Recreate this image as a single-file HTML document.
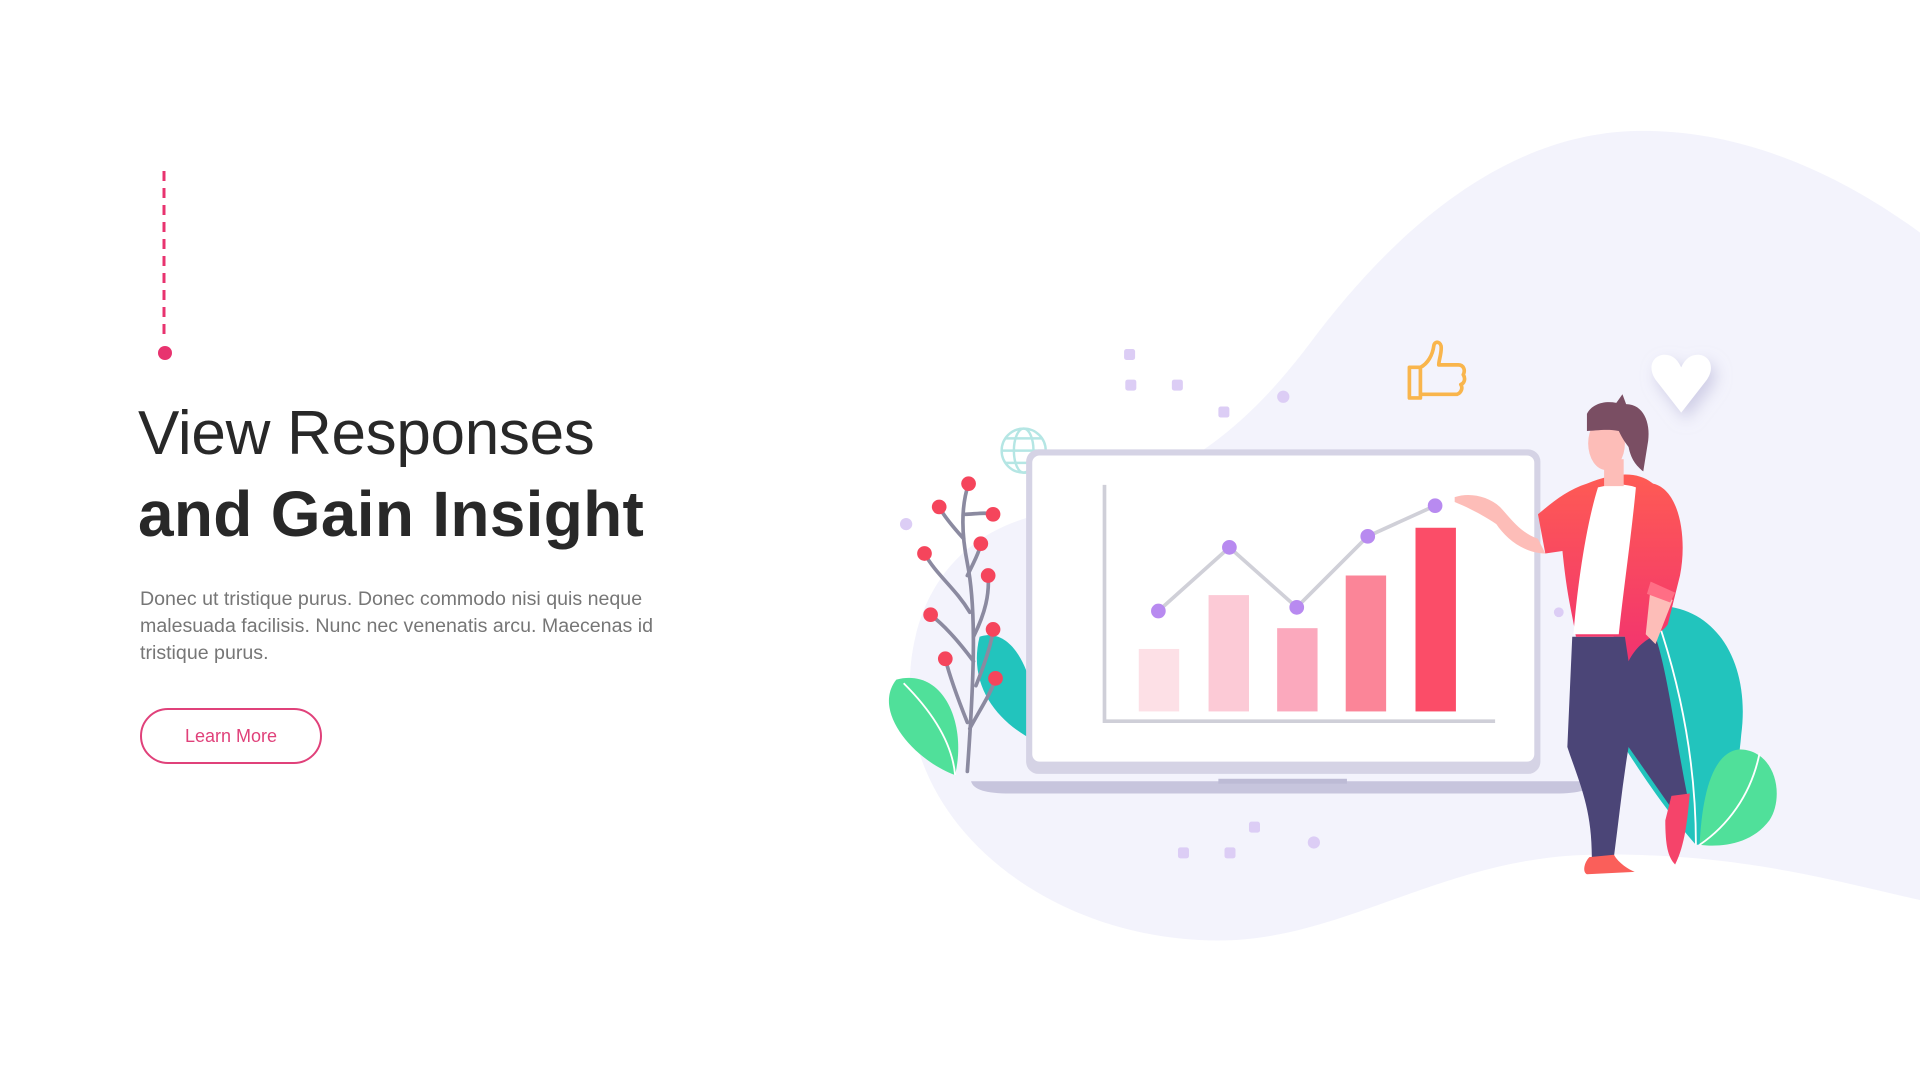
<!DOCTYPE html>
<html><head><meta charset="utf-8"><style>
html,body{margin:0;padding:0;width:1920px;height:1080px;overflow:hidden;background:#fff;font-family:"Segoe UI","Liberation Sans","DejaVu Sans",sans-serif;}
svg.bg{position:absolute;left:0;top:0;width:1920px;height:1080px;}
.dash{position:absolute;left:162px;top:171px;}
.dot{position:absolute;left:158px;top:346px;width:14px;height:14px;border-radius:50%;background:#e8336f;}
h1{position:absolute;left:138px;top:394px;margin:0;font-size:62px;line-height:80px;color:#282828;font-weight:400;letter-spacing:-0.3px;white-space:nowrap;}
h1 b{font-weight:700;font-size:64px;letter-spacing:0.3px;}
p{position:absolute;left:140px;top:586px;margin:0;width:560px;font-size:19.6px;line-height:27px;color:#767676;}
.btn{position:absolute;left:140px;top:708px;width:178px;height:52px;border:2px solid #e0417a;border-radius:28px;color:#e0417a;font-size:18px;line-height:52px;text-align:center;}
</style></head><body>
<svg class="bg" viewBox="0 0 1568 882" preserveAspectRatio="none">
<defs>
<linearGradient id="jk" x1="0" y1="0" x2="0" y2="1"><stop offset="0" stop-color="#fe5b54"/><stop offset="1" stop-color="#f2336f"/></linearGradient>
<filter id="sh" x="-50%" y="-50%" width="200%" height="200%"><feDropShadow dx="4" dy="6" stdDeviation="6" flood-color="#b8b6d8" flood-opacity="0.6"/></filter>
</defs>
<path d="M1568,190 C1500,140 1420,105 1335,107 C1220,110 1130,200 1070,280 C1010,360 950,400 850,420 C760,440 735,520 745,590 C760,690 870,770 1000,768 C1100,766 1180,700 1300,698 C1420,696 1500,720 1568,735 Z" fill="#f3f3fc"/>
<g fill="#dccdf5">
<rect x="918" y="285" width="9" height="9" rx="2"/><rect x="919" y="310" width="9" height="9" rx="2"/><rect x="957" y="310" width="9" height="9" rx="2"/><rect x="995" y="332" width="9" height="9" rx="2"/>
<circle cx="1048" cy="324" r="5"/><circle cx="740" cy="428" r="5"/><circle cx="1073" cy="688" r="5"/><circle cx="1273" cy="500" r="4"/>
<rect x="1020" y="671" width="9" height="9" rx="2"/><rect x="962" y="692" width="9" height="9" rx="2"/><rect x="1000" y="692" width="9" height="9" rx="2"/>
</g>
<g stroke="#b5e6e4" stroke-width="2" fill="none"><circle cx="836" cy="368" r="18"/><ellipse cx="836" cy="368" rx="8" ry="18"/><line x1="818" y1="368" x2="854" y2="368"/><line x1="821" y1="358" x2="851" y2="358"/><line x1="821" y1="378" x2="851" y2="378"/></g>
<path d="M1151,300 h9 v25 h-9 z M1160,300 c6,-3 10,-10 11,-18 c1,-4 6,-3 6,2 c0,6 -2,10 -2,14 h16 c4,0 6,4 4,8 c2,3 1,7 -2,8 c2,3 0,7 -3,8 h-30" fill="none" stroke="#f9b54c" stroke-width="3" stroke-linejoin="round"/>
<path d="M1373,337 L1352,310 C1344,298 1352,288 1362,290 C1368,291 1371,296 1373,300 C1375,296 1378,291 1384,290 C1394,288 1402,298 1394,310 Z" fill="#fff" filter="url(#sh)"/>
<path d="M800,520 C830,510 850,560 845,605 C815,590 790,560 800,520 Z" fill="#22c4bd"/>
<path d="M732,555 C770,545 790,590 780,633 C745,620 712,580 732,555 Z" fill="#50e09a"/>
<path d="M738,558 C765,585 778,610 780,633" stroke="#fff" stroke-width="1.5" fill="none"/>
<g stroke="#8b8aa0" stroke-width="3" fill="none" stroke-linecap="round">
<path d="M790,630 C795,560 798,500 790,460 C784,430 786,410 791,395"/>
<path d="M788,420 C795,420 805,418 811,420"/><path d="M787,440 C778,430 770,420 767,414"/>
<path d="M790,470 C795,460 800,450 801,444"/><path d="M792,500 C780,480 765,470 755,452"/>
<path d="M795,520 C805,500 808,485 807,470"/><path d="M795,540 C780,520 770,510 760,502"/>
<path d="M797,560 C805,540 810,525 811,514"/><path d="M790,590 C782,570 775,550 772,538"/><path d="M792,595 C800,580 810,565 813,554"/>
</g>
<g fill="#f5455c"><circle cx="791" cy="395" r="6"/><circle cx="811" cy="420" r="6"/><circle cx="767" cy="414" r="6"/><circle cx="801" cy="444" r="6"/><circle cx="755" cy="452" r="6"/><circle cx="807" cy="470" r="6"/><circle cx="760" cy="502" r="6"/><circle cx="811" cy="514" r="6"/><circle cx="772" cy="538" r="6"/><circle cx="813" cy="554" r="6"/></g>
<rect x="838" y="367" width="420" height="265" rx="10" fill="#d5d3e5"/>
<rect x="843" y="372" width="410" height="250" rx="6" fill="#fff"/>
<path d="M793,638 H1302 C1300,645 1290,648 1270,648 H825 C805,648 795,645 793,638 Z" fill="#c7c5dd"/>
<rect x="995" y="636" width="105" height="4" fill="#bdbbd5"/>
<path d="M902,396 V589 H1221" stroke="#cfcfd8" stroke-width="3" fill="none"/>
<rect x="930" y="530" width="33" height="51" fill="#fde0e6"/>
<rect x="987" y="486" width="33" height="95" fill="#fccad6"/>
<rect x="1043" y="513" width="33" height="68" fill="#fba9bd"/>
<rect x="1099" y="470" width="33" height="111" fill="#fb8598"/>
<rect x="1156" y="431" width="33" height="150" fill="#fb4d68"/>
<polyline points="946,499 1004,447 1059,496 1117,438 1172,413" stroke="#d0d0d8" stroke-width="3" fill="none"/>
<g fill="#b88af0"><circle cx="946" cy="499" r="6"/><circle cx="1004" cy="447" r="6"/><circle cx="1059" cy="496" r="6"/><circle cx="1117" cy="438" r="6"/><circle cx="1172" cy="413" r="6"/></g>
<path d="M1345,495 C1400,490 1430,540 1422,600 C1418,650 1400,690 1385,690 C1350,650 1320,600 1312,585 C1300,560 1315,500 1345,495 Z" fill="#22c4bd"/>
<path d="M1355,510 C1375,570 1385,630 1385,690" stroke="#fff" stroke-width="1.5" fill="none"/>
<path d="M1420,612 C1450,612 1458,650 1445,670 C1430,690 1405,692 1388,690 C1390,650 1398,615 1420,612 Z" fill="#50e09a"/>
<path d="M1437,615 C1430,650 1410,675 1388,690" stroke="#fff" stroke-width="1.5" fill="none"/>
<path d="M1188,406 C1200,402 1215,405 1225,414 C1235,425 1242,435 1256,440 L1262,452 C1245,452 1230,440 1222,428 C1210,420 1200,415 1188,410 Z" fill="#fdbdb8"/>
<path d="M1284,520 L1280,610 C1290,640 1300,660 1300,700 L1318,700 C1322,670 1325,640 1330,610 L1365,660 L1378,650 C1368,600 1362,550 1352,520 Z" fill="#4b4577"/>
<path d="M1298,700 L1318,698 C1322,705 1330,710 1335,712 L1296,714 C1292,712 1294,704 1298,700 Z" fill="#fa5f5a"/>
<path d="M1365,650 L1380,648 C1378,670 1376,690 1368,706 C1362,700 1360,690 1360,670 Z" fill="#f5446a"/>
<path d="M1296,395 C1320,385 1338,385 1350,395 C1372,400 1378,440 1372,470 L1362,510 C1355,520 1340,520 1330,540 L1327,520 L1287,520 C1284,500 1280,490 1276,450 L1262,452 L1256,420 C1268,410 1280,400 1296,395 Z" fill="url(#jk)"/>
<path d="M1305,398 C1318,395 1328,395 1336,398 C1332,440 1326,480 1322,518 L1285,518 C1288,480 1295,430 1305,398 Z" fill="#fff"/>
<path d="M1348,480 L1366,490 L1352,526 L1344,518 Z" fill="#fdbdb8"/>
<path d="M1348,475 L1368,484 L1364,492 L1345,485 Z" fill="#ff6e85"/>
<rect x="1310" y="375" width="16" height="22" fill="#fdbdb8"/>
<ellipse cx="1312" cy="362" rx="15" ry="22" fill="#fdbdb8"/>
<path d="M1296,338 C1300,330 1310,327 1320,329 L1325,322 L1328,330 C1342,330 1348,345 1346,360 L1342,385 C1336,380 1332,375 1330,365 C1326,360 1324,356 1322,352 C1312,350 1302,352 1296,352 Z" fill="#7a4e63"/>
</svg>
<svg class="dash" width="4" height="164"><line x1="2" y1="0" x2="2" y2="164" stroke="#e8336f" stroke-width="3" stroke-dasharray="10,7"/></svg>
<div class="dot"></div>
<h1>View Responses<br><b>and Gain Insight</b></h1>
<p>Donec ut tristique purus. Donec commodo nisi quis neque malesuada facilisis. Nunc nec venenatis arcu. Maecenas id tristique purus.</p>
<div class="btn">Learn More</div>
</body></html>
